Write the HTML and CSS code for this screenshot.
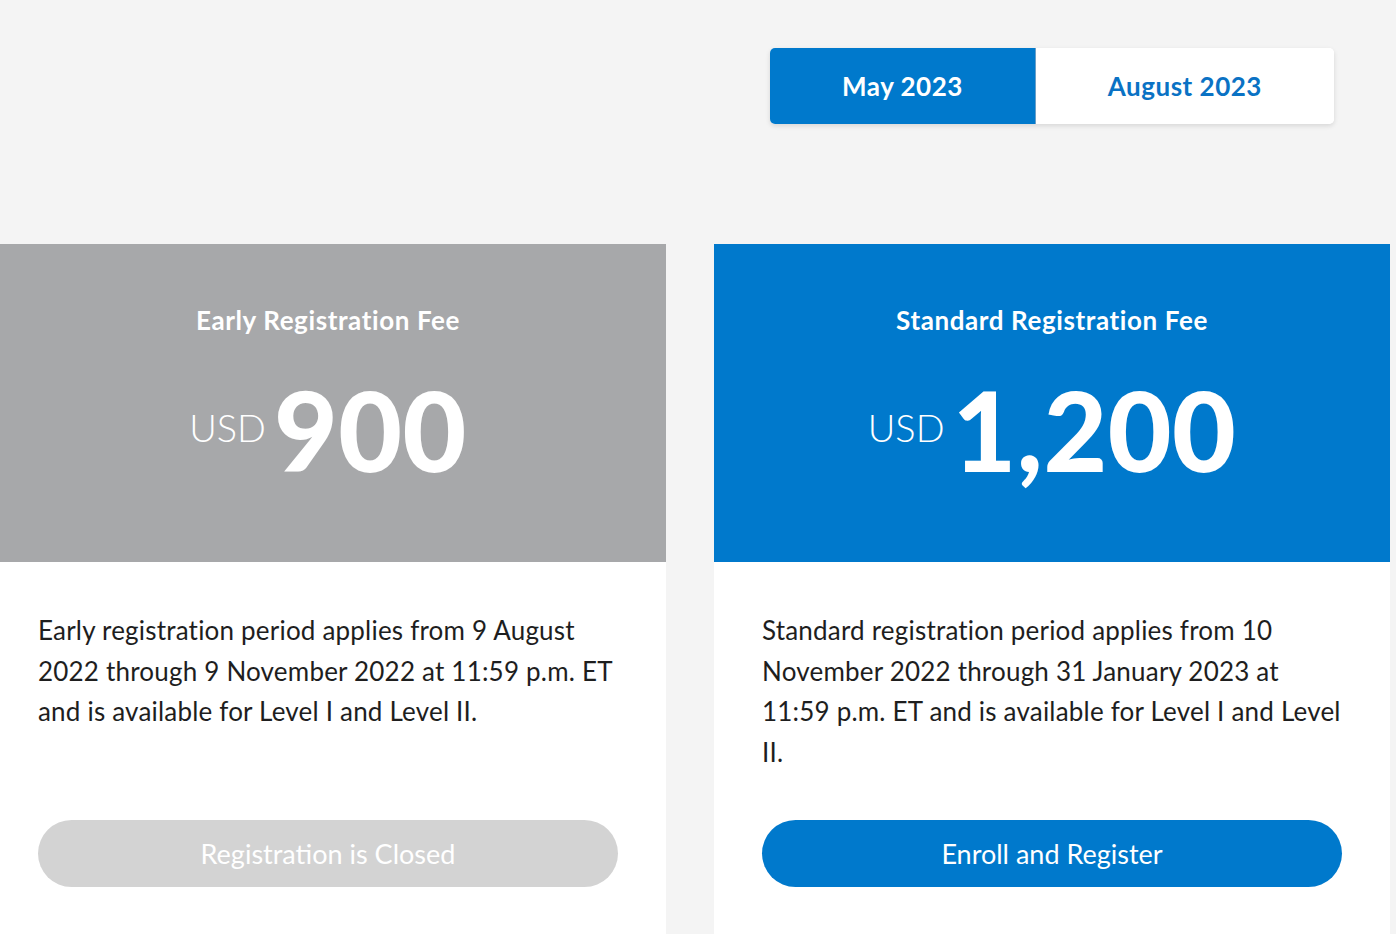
FILE: index.html
```html
<!DOCTYPE html>
<html lang="en">
<head>
    <meta charset="UTF-8">
    <meta name="viewport" content="width=device-width, initial-scale=1.0">
    <title>Registration Fees</title>
    <link rel="stylesheet" href="styles.css">
</head>
<body>
    <div class="page">
        <div class="top-row">
            <div></div>
            <div class="toggle-wrap">
                <div class="toggle">
                    <button class="toggle-btn active">May 2023</button>
                    <button class="toggle-btn">August 2023</button>
                </div>
            </div>
        </div>

        <div class="cards">
            <div class="card">
                <div class="card-head grey">
                    <h3>Early Registration Fee</h3>
                    <div class="price">
                        <span class="currency">USD</span>
                        <span class="amount">900</span>
                    </div>
                </div>
                <div class="card-body">
                    <p>Early registration period applies from 9 August 2022 through 9 November 2022 at 11:59 p.m. ET and is available for Level I and Level II.</p>
                    <button class="pill disabled">Registration is Closed</button>
                </div>
            </div>

            <div class="card">
                <div class="card-head blue">
                    <h3>Standard Registration Fee</h3>
                    <div class="price">
                        <span class="currency">USD</span>
                        <span class="amount">1,200</span>
                    </div>
                </div>
                <div class="card-body">
                    <p>Standard registration period applies from 10 November 2022 through 31 January 2023 at 11:59 p.m. ET and is available for Level I and Level II.</p>
                    <button class="pill">Enroll and Register</button>
                </div>
            </div>
        </div>
    </div>
</body>
</html>
```

FILE: styles.css
```css
body {
    margin: 0;
    background-color: #f4f4f4;
    font-family: Lato, "Open Sans", sans-serif;
    color: #1e1e1e;
    overflow: hidden;
}
.page {
    width: 1400px;
    margin-left: -10px;
}
.top-row {
    display: grid;
    grid-template-columns: 1fr 1fr;
    column-gap: 48px;
    padding-top: 48px;
}
.toggle-wrap {
    display: flex;
    justify-content: center;
}
.toggle {
    display: flex;
    background-color: #ffffff;
    border-radius: 5px;
    box-shadow: 0 2px 5px rgba(0, 0, 0, 0.12);
    overflow: hidden;
}
.toggle-btn {
    font-family: Lato, sans-serif;
    font-size: 26px;
    font-weight: 700;
    line-height: 32px;
    letter-spacing: 0.5px;
    padding: 22px 72px;
    border: none;
    background-color: #ffffff;
    color: #0a72c4;
    cursor: pointer;
}
.toggle-btn.active {
    background-color: #0079cc;
    color: #ffffff;
    border-right: 1px solid #6a9fc8;
}
.cards {
    display: grid;
    grid-template-columns: 1fr 1fr;
    column-gap: 48px;
    margin-top: 120px;
}
.card {
    display: flex;
    flex-direction: column;
    background-color: #ffffff;
}
.card-head {
    height: 318px;
    box-sizing: border-box;
    padding-top: 60px;
    text-align: center;
    color: #ffffff;
}
.card-head.grey {
    background-color: #a7a8aa;
}
.card-head.blue {
    background-color: #0079cc;
}
.card-head h3 {
    margin: 0;
    font-size: 26px;
    font-weight: 700;
    line-height: 32px;
    letter-spacing: 0.6px;
}
.price {
    display: flex;
    justify-content: center;
    align-items: baseline;
    gap: 8px;
    margin-top: 38px;
}
.currency {
    font-size: 38px;
    font-weight: 300;
    position: relative;
    top: -30px;
}
.amount {
    font-size: 110px;
    font-weight: 900;
    line-height: 110px;
    letter-spacing: 0.5px;
}
.card-body {
    flex: 1;
    display: flex;
    flex-direction: column;
    padding: 48px 48px 60px;
}
.card-body p {
    margin: 0 0 48px;
    font-size: 26px;
    line-height: 40.5px;
    letter-spacing: 0.2px;
}
.pill {
    margin-top: auto;
    height: 67px;
    border: none;
    border-radius: 34px;
    background-color: #0079cc;
    color: #ffffff;
    font-family: Lato, sans-serif;
    font-size: 27px;
    cursor: pointer;
}
.pill.disabled {
    background-color: #d3d3d3;
    cursor: default;
}
```
